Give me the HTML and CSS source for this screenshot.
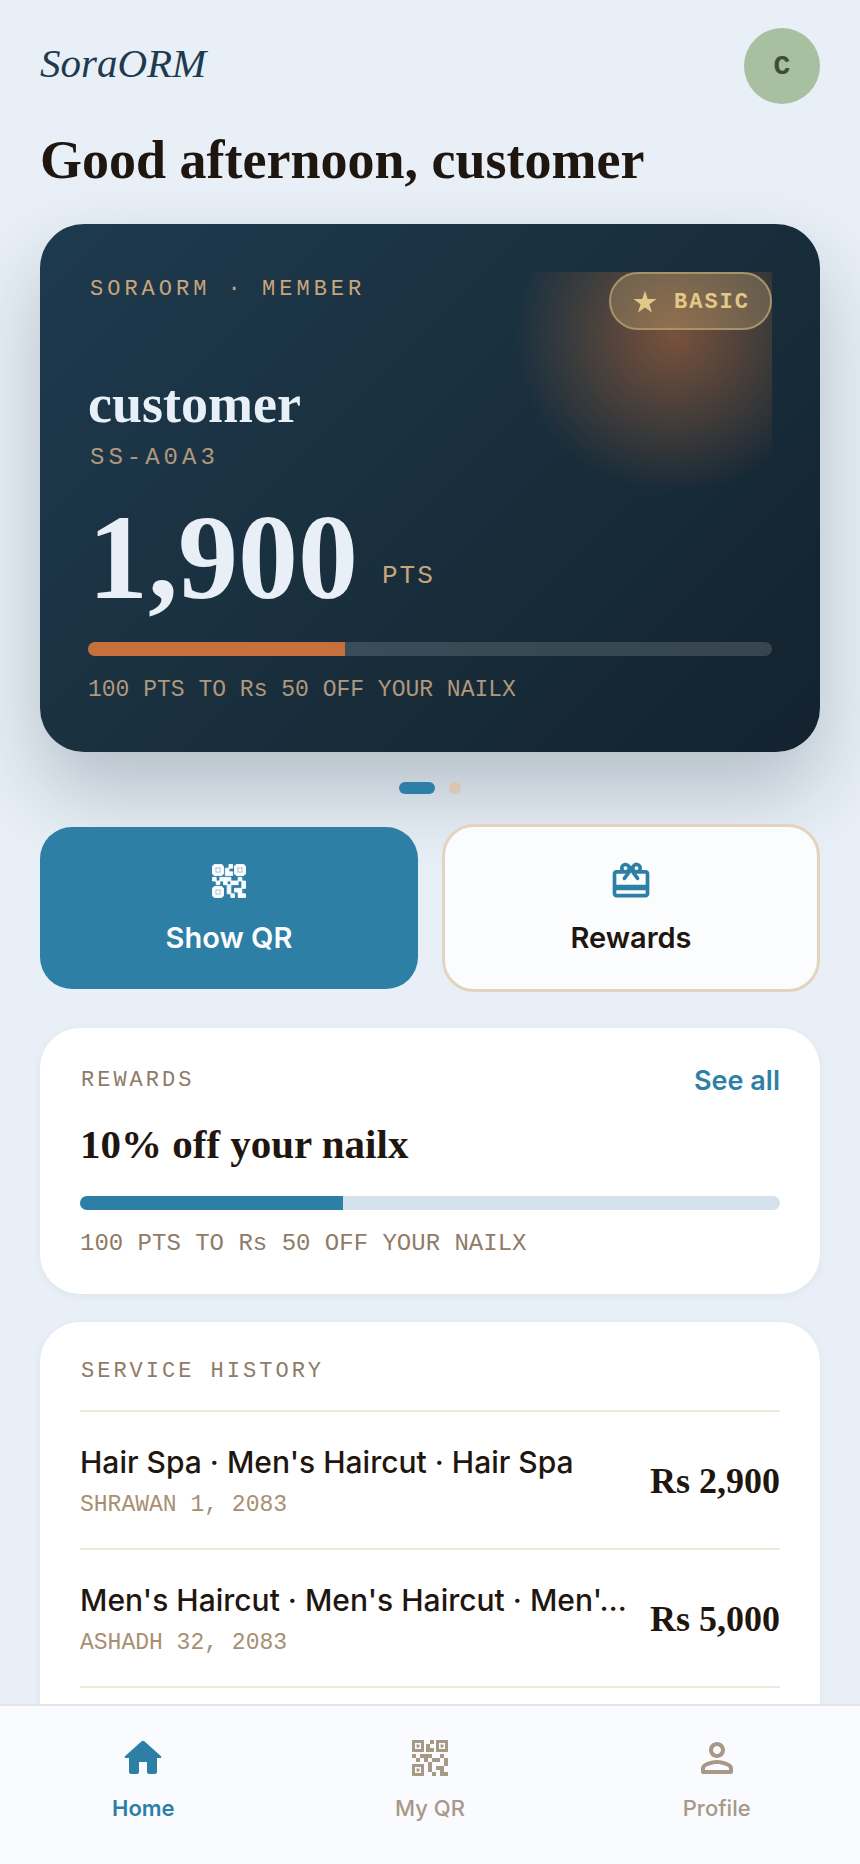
FILE: index.html
```
<!DOCTYPE html>
<html lang="en">
<head>
    <meta charset="UTF-8">
    <meta name="viewport" content="width=device-width, initial-scale=1.0">
    <title>SoraORM</title>
    <link rel="stylesheet" href="styles.css">
</head>
<body>
    <main>
        <header>
            <a class="logo" href="#">SoraORM</a>
            <button class="avatar" type="button">C</button>
        </header>

        <h1>Good afternoon, customer</h1>

        <section class="member-card">
            <div class="member-body">
                <div class="member-top">
                    <span class="member-label">SORAORM · MEMBER</span>
                    <span class="tier">
                        <svg viewBox="0 0 24 24"><path d="M12 1.500l2.500 7.700h8.100l-6.500 4.800 2.400 7.700L12 17l-6.500 4.700L7.900 14 1.400 9.200h8.100z"/></svg>
                        BASIC
                    </span>
                </div>
                <h2>customer</h2>
                <p class="member-id">SS-A0A3</p>
                <p class="points"><strong>1,900</strong> <span>PTS</span></p>
                <div class="progress"><div style="width: 37.5%"></div></div>
                <p class="progress-text">100 PTS TO Rs 50 OFF YOUR NAILX</p>
            </div>
        </section>

        <div class="dots">
            <span class="dot active"></span>
            <span class="dot"></span>
        </div>

        <div class="actions">
            <button class="action primary" type="button">
                <svg class="bold-icon" viewBox="0 0 24 24"><path d="M15 21h-2v-2h2v2zM13 14h-2v5h2v-5zM21 12h-2v4h2v-4zM19 10h-2v2h2v-2zM7 12H5v2h2v-2zM5 10H3v2h2v-2zM12 5h2V3h-2v2zM9 4.100V8.100L8.100 9H3.900L3 8.100V3.900L3.900 3H8.100L9 3.900zM4.500 4.500v3h3v-3h-3zM3.900 21L3 20.100V15.900l.900-.900H8.100l.900.900V20.100l-.900.900H3.900zM4.500 16.500v3h3v-3h-3zM15.900 9L15 8.100V3.900l.900-.900H20.100l.900.900V8.100l-.900.900H15.900zM16.500 4.500v3h3v-3h-3zM19 19v-3h-4v2h2v3h4v-2h-2zM17 12h-4v2h4v-2zM13 10H7v2h2v2h2v-2h2v-2zM14 9V7h-2V5h-2v4h4zM6.750 5.250h-1.500v1.500h1.500v-1.500zM6.750 17.250h-1.500v1.500h1.500v-1.500zM18.750 5.250h-1.500v1.500h1.500v-1.500z"/></svg>
                Show QR
            </button>
            <button class="action" type="button">
                <svg viewBox="0 0 24 24"><path d="M20 6h-2.180c.110-.310.180-.650.180-1a2.996 2.996 0 0 0-5.500-1.650l-.500.670-.500-.680C10.960 2.540 10.050 2 9 2 7.340 2 6 3.340 6 5c0 .350.070.690.180 1H4c-1.110 0-1.990.890-1.990 2L2 19c0 1.110.890 2 2 2h16c1.110 0 2-.890 2-2V8c0-1.110-.890-2-2-2zm-5-2c.550 0 1 .450 1 1s-.450 1-1 1-1-.450-1-1 .450-1 1-1zM9 4c.550 0 1 .450 1 1s-.450 1-1 1-1-.450-1-1 .450-1 1-1zm11 15H4v-2h16v2zm0-5H4V8h5.080L7.600 10.020c-.330.440-.230 1.070.220 1.390.440.320 1.070.220 1.390-.220L11 8.760l1-1.360 1 1.360 1.790 2.430c.320.440.950.540 1.390.220.450-.320.550-.950.220-1.390L14.920 8H20v6z"/></svg>
                Rewards
            </button>
        </div>

        <section class="card">
            <div class="card-head">
                <h3>REWARDS</h3>
                <a href="#">See all</a>
            </div>
            <p class="reward-name">10% off your nailx</p>
            <div class="progress"><div style="width: 37.5%"></div></div>
            <p class="progress-text">100 PTS TO Rs 50 OFF YOUR NAILX</p>
        </section>

        <section class="card history">
            <h3>SERVICE HISTORY</h3>
            <ul>
                <li>
                    <div class="visit">
                        <p class="visit-name">Hair Spa · Men's Haircut · Hair Spa</p>
                        <p class="visit-date">SHRAWAN 1, 2083</p>
                    </div>
                    <span class="amount">Rs 2,900</span>
                </li>
                <li>
                    <div class="visit">
                        <p class="visit-name">Men's Haircut · Men's Haircut · Men'…</p>
                        <p class="visit-date">ASHADH 32, 2083</p>
                    </div>
                    <span class="amount">Rs 5,000</span>
                </li>
            </ul>
        </section>
    </main>

    <nav>
        <a class="active" href="#">
            <svg viewBox="0 0 24 24"><path d="M10 19v-5h4v5c0 .550.450 1 1 1h3c.550 0 1-.450 1-1v-7h1.700c.460 0 .680-.570.330-.870L12.670 3.600c-.380-.340-.960-.340-1.340 0l-8.360 7.530c-.340.300-.130.870.330.870H5v7c0 .550.450 1 1 1h3c.550 0 1-.450 1-1z"/></svg>
            Home
        </a>
        <a href="#">
            <svg viewBox="0 0 24 24"><path d="M15 21h-2v-2h2v2zM13 14h-2v5h2v-5zM21 12h-2v4h2v-4zM19 10h-2v2h2v-2zM7 12H5v2h2v-2zM5 10H3v2h2v-2zM12 5h2V3h-2v2zM4.500 4.500v3h3v-3h-3zM9 9H3V3h6v6zM4.500 16.500v3h3v-3h-3zM9 21H3v-6h6v6zM16.500 4.500v3h3v-3h-3zM21 9h-6V3h6v6zM19 19v-3h-4v2h2v3h4v-2h-2zM17 12h-4v2h4v-2zM13 10H7v2h2v2h2v-2h2v-2zM14 9V7h-2V5h-2v4h4zM6.750 5.250h-1.500v1.500h1.500v-1.500zM6.750 17.250h-1.500v1.500h1.500v-1.500zM18.750 5.250h-1.500v1.500h1.500v-1.500z"/></svg>
            My QR
        </a>
        <a href="#">
            <svg viewBox="0 0 24 24"><path d="M12 6c1.100 0 2 .900 2 2s-.900 2-2 2-2-.900-2-2 .900-2 2-2m0 9c2.700 0 5.800 1.290 6 2v1H6v-.990c.200-.720 3.300-2.010 6-2.010m0-11C9.790 4 8 5.790 8 8s1.790 4 4 4 4-1.790 4-4-1.790-4-4-4zm0 9c-2.670 0-8 1.340-8 4v2c0 .550.450 1 1 1h14c.550 0 1-.450 1-1v-2c0-2.660-5.330-4-8-4z"/></svg>
            Profile
        </a>
    </nav>
</body>
</html>
```
FILE: styles.css
```
* {
    box-sizing: border-box;
}
body {
    margin: 0;
    height: 100vh;
    display: flex;
    flex-direction: column;
    background-color: #e8eff6;
    color: #1f1610;
    font-family: Inter, sans-serif;
}
h1, h2, h3, p, ul {
    margin: 0;
    padding: 0;
}
button {
    border: none;
    cursor: pointer;
    font-family: inherit;
}
a {
    text-decoration: none;
}
svg {
    display: block;
    fill: currentColor;
    fill-rule: evenodd;
}
main {
    flex: 1;
    min-height: 0;
    overflow-y: auto;
    scrollbar-width: none;
    padding: 28px 40px 0;
}
header {
    display: flex;
    justify-content: space-between;
    align-items: center;
}
.logo {
    color: #1e3a4f;
    font-family: "Liberation Serif", serif;
    font-size: 41px;
    font-style: italic;
    line-height: 48px;
    padding-bottom: 6px;
}
.avatar {
    width: 76px;
    height: 76px;
    padding: 0;
    border-radius: 50%;
    background-color: #a8bfa0;
    color: #3a5233;
    font-family: "Liberation Mono", monospace;
    font-size: 28px;
    font-weight: bold;
}
h1 {
    margin: 26px 0 34px;
    font-family: "Liberation Serif", serif;
    font-size: 54px;
    font-weight: bold;
    line-height: 60px;
}

/* Membership card */
.member-card {
    padding: 48px;
    border-radius: 44px;
    background: linear-gradient(135deg, #1e3a4f 0%, #192f3d 50%, #13222e 100%);
    box-shadow: 0 40px 80px rgba(20, 40, 55, 0.24);
    color: #e8eff6;
}
.member-body {
    background: radial-gradient(circle 160px at calc(100% - 98px) 62px, rgba(200, 112, 60, 0.55), rgba(200, 112, 60, 0));
}
.member-top {
    display: flex;
    justify-content: space-between;
    align-items: flex-start;
}
.member-label {
    padding-left: 2px;
    color: #c9a57a;
    font-family: "Liberation Mono", monospace;
    font-size: 22px;
    letter-spacing: 4px;
    line-height: 36px;
}
.tier {
    display: flex;
    align-items: center;
    gap: 16px;
    height: 58px;
    padding: 2px 20px 0 21px;
    border: 2px solid #a8926a;
    border-radius: 29px;
    background-color: rgba(228, 200, 136, 0.25);
    color: #e4c888;
    font-family: "Liberation Mono", monospace;
    font-size: 22px;
    font-weight: bold;
    letter-spacing: 2px;
}
.tier svg {
    width: 26px;
    height: 26px;
}
.member-card h2 {
    margin-top: 44px;
    font-family: "Liberation Serif", serif;
    font-size: 54px;
    line-height: 60px;
}
.member-id {
    margin-top: 8px;
    padding-left: 2px;
    color: #b1977c;
    font-family: "Liberation Mono", monospace;
    font-size: 24px;
    letter-spacing: 4px;
    line-height: 32px;
}
.points {
    display: flex;
    align-items: flex-end;
    gap: 24px;
    margin: 28px 0;
    font-family: "Liberation Serif", serif;
    font-size: 120px;
    line-height: 112px;
}
.points span {
    padding-bottom: 22px;
    color: #c9a57a;
    font-family: "Liberation Mono", monospace;
    font-size: 26px;
    letter-spacing: 2px;
    line-height: 32px;
}
.progress {
    height: 14px;
    border-radius: 7px;
    background-color: #d5e2ed;
    overflow: hidden;
}
.progress div {
    height: 100%;
    background-color: #2e7fa6;
}
.progress-text {
    margin-top: 20px;
    color: #8f7b68;
    font-family: "Liberation Mono", monospace;
    font-size: 24px;
    line-height: 28px;
}
.member-card .progress {
    background-color: rgba(255, 255, 255, 0.15);
}
.member-card .progress div {
    background-color: #c8703c;
}
.member-card .progress-text {
    color: #b1977c;
    font-size: 23px;
}

.dots {
    display: flex;
    justify-content: center;
    gap: 14px;
    margin: 30px 0;
}
.dot {
    width: 12px;
    height: 12px;
    border-radius: 6px;
    background-color: #d9c7af;
}
.dot.active {
    width: 36px;
    background-color: #2e7fa6;
}

/* Buttons */
.actions {
    display: grid;
    grid-template-columns: 1fr 1fr;
    align-items: center;
    gap: 24px;
    margin-bottom: 36px;
}
.action {
    display: flex;
    flex-direction: column;
    align-items: center;
    gap: 16px;
    padding: 32px;
    border: 3px solid #e2d4bf;
    border-radius: 32px;
    background-color: #fbfcfe;
    color: #1f1610;
    font-size: 29px;
    font-weight: 600;
    line-height: 38px;
}
.action svg {
    width: 44px;
    height: 44px;
    color: #2e7fa6;
}
.action.primary {
    border: none;
    background-color: #2e7fa6;
    color: #fbfcfe;
}
.action.primary svg {
    color: #fbfcfe;
}
.bold-icon {
    stroke: currentColor;
    stroke-width: 0.5;
    stroke-linejoin: round;
}

/* White cards */
.card {
    margin-bottom: 28px;
    padding: 40px 40px 36px;
    border-radius: 40px;
    background-color: #fff;
    box-shadow: 0 2px 8px rgba(30, 58, 79, 0.05);
}
.card-head {
    display: flex;
    justify-content: space-between;
    align-items: center;
}
.card h3 {
    padding-left: 1px;
    color: #8f7b68;
    font-family: "Liberation Mono", monospace;
    font-size: 22px;
    font-weight: normal;
    letter-spacing: 3px;
    line-height: 20px;
}
.card-head a {
    color: #2e7fa6;
    font-size: 27px;
    font-weight: 600;
    line-height: 26px;
}
.reward-name {
    margin: 24px 0 26px;
    font-family: "Liberation Serif", serif;
    font-size: 41px;
    font-weight: bold;
    line-height: 52px;
}
.history {
    padding-bottom: 80px;
}
.history ul {
    margin-top: 28px;
    border-bottom: 2px solid #f0e8da;
    list-style-type: none;
}
.history li {
    display: flex;
    justify-content: space-between;
    align-items: center;
    gap: 20px;
    padding: 31px 0 29px;
    border-top: 2px solid #f0e8da;
}
.visit {
    min-width: 0;
}
.visit-name {
    overflow: hidden;
    text-overflow: ellipsis;
    white-space: nowrap;
    font-size: 30px;
    font-weight: 500;
    line-height: 38px;
}
.visit-date {
    margin-top: 10px;
    color: #a98f72;
    font-family: "Liberation Mono", monospace;
    font-size: 23px;
    line-height: 28px;
}
.amount {
    flex-shrink: 0;
    font-family: "Liberation Serif", serif;
    font-size: 36px;
    font-weight: bold;
}

nav {
    display: grid;
    grid-template-columns: repeat(3, 1fr);
    padding: 28px 0 42px;
    border-top: 2px solid #e5e5e7;
    background-color: #fafbff;
}
nav a {
    display: flex;
    flex-direction: column;
    align-items: center;
    gap: 12px;
    color: #a89888;
    font-size: 22px;
    font-weight: 500;
    line-height: 28px;
}
nav svg {
    width: 48px;
    height: 48px;
}
nav a.active {
    color: #2e7fa6;
    font-weight: 600;
}
```
